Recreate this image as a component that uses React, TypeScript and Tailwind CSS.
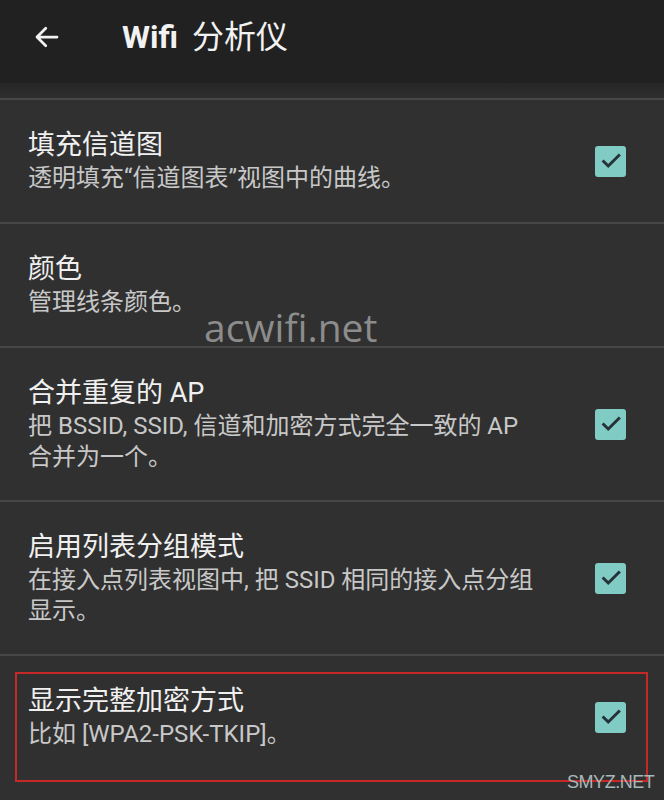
import React from 'react';

const font = { fontFamily: 'Roboto, "Noto Sans CJK SC", sans-serif' };

type Item = { title: string; lines: string[]; checked: boolean; tall?: boolean };

const items: Item[] = [
    { title: '填充信道图', lines: ['透明填充“信道图表”视图中的曲线。'], checked: true },
    { title: '颜色', lines: ['管理线条颜色。'], checked: false },
    { title: '合并重复的 AP', lines: ['把 BSSID, SSID, 信道和加密方式完全一致的 AP', '合并为一个。'], checked: true, tall: true },
    { title: '启用列表分组模式', lines: ['在接入点列表视图中, 把 SSID 相同的接入点分组', '显示。'], checked: true, tall: true },
    { title: '显示完整加密方式', lines: ['比如 [WPA2-PSK-TKIP]。'], checked: true },
];

function CheckBox() {
    return (
        <div className="flex h-[31px] w-[31px] shrink-0 items-center justify-center rounded-[3px] bg-[#80cbc4]">
            <svg width="22" height="22" viewBox="0 0 24 24" fill="none">
                <path d="M4 12.5l5 5L20.5 6" stroke="#263238" strokeWidth="3.2" strokeLinecap="square" />
            </svg>
        </div>
    );
}

export default function App() {
    return (
        <div className="relative h-[800px] w-[664px] overflow-hidden bg-[#303030]" style={font}>
            {/* Toolbar */}
            <div className="flex h-[83px] items-center bg-[#212121] pb-[10px]">
                <svg className="ml-[32px]" width="30" height="30" viewBox="0 0 24 24" fill="none">
                    <path d="M20 12H4.5M11 5l-7 7 7 7" stroke="#f2f2f2" strokeWidth="2.2" strokeLinecap="round" strokeLinejoin="round" />
                </svg>
                <div className="ml-[60px] flex items-baseline gap-[14px] text-[32px] text-[#f2f2f2]">
                    <span className="font-bold">Wifi</span>
                    <span>分析仪</span>
                </div>
            </div>
            <div className="h-[15px] bg-gradient-to-b from-[#262626] to-[#2e2e2e]" />
            <div className="h-[2px] bg-[#474747]" />

            {items.map((it, i) => (
                <div key={i}>
                    <div className={`flex items-center pl-[28px] pr-[38px] ${it.tall ? 'h-[152px]' : 'h-[122px]'}`}>
                        <div className="flex-1 whitespace-nowrap">
                            <div className="text-[27px] leading-[35px] text-[#f0f0f0]">{it.title}</div>
                            {it.lines.map((l, j) => (
                                <div key={j} className="text-[24px] leading-[31px] text-[#c8c8c8]">{l}</div>
                            ))}
                        </div>
                        {it.checked && <CheckBox />}
                    </div>
                    {i < items.length - 1 && <div className="h-[2px] bg-[#474747]" />}
                </div>
            ))}

            {/* watermarks / annotation */}
            <div className="absolute left-[204px] top-[298px] text-[39px] text-[#8c8c8c]" style={{ fontFamily: '"Open Sans", sans-serif' }}>
                acwifi.net
            </div>
            <div className="absolute left-[15px] top-[672px] h-[110px] w-[633px] border-2 border-[#c62828]" />
            <div className="absolute left-[567px] top-[769px] text-[18px] tracking-tight text-[#a9b8b8]" style={{ fontFamily: '"Liberation Sans", sans-serif' }}>
                SMYZ.NET
            </div>
        </div>
    );
}
